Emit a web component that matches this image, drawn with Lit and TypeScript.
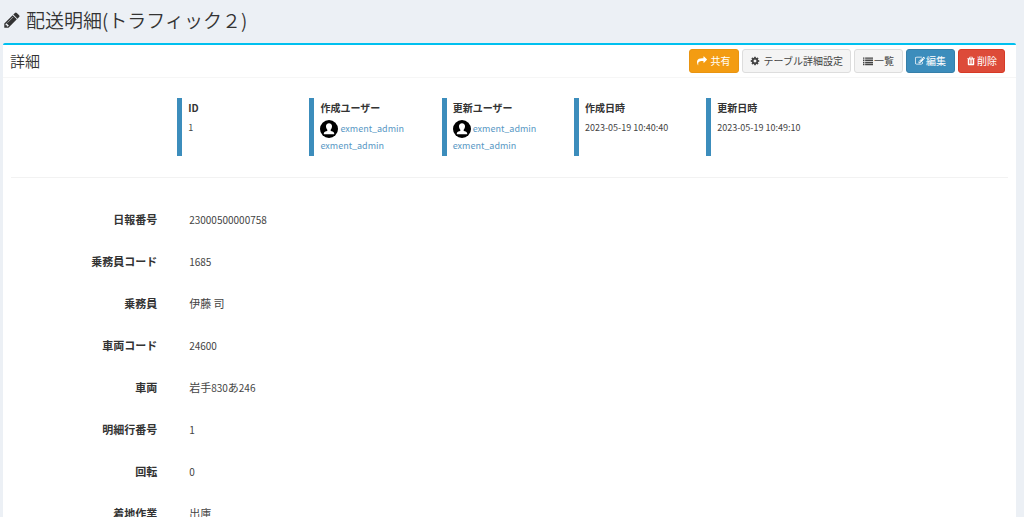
import { LitElement, html, css, svg } from "lit";
import { customElement, property } from "lit/decorators.js";

const ICONS: Record<string, string> = {
  pencil:
    "M491 1536l91-91-235-235-91 91v107h128v128h107zM1014 608q0-22-22-22-10 0-17 7l-542 542q-7 7-7 17 0 22 22 22 10 0 17-7l542-542q7-7 7-17zM960 416l416 416-832 832h-416v-416zM1643 512q0 53-37 90l-166 166-416-416 166-165q36-38 90-38 53 0 91 38l235 234q37 39 37 91z",
  share:
    "M1792 640q0 26-19 45l-512 512q-19 19-45 19t-45-19-19-45v-256h-224q-98 0-175.500 6t-154 21.500-133 42.500-105.500 69.500-80 101-48.500 138.500-17.500 181q0 55 5 123 0 6 2.500 23.500t2.500 26.500q0 15-8.500 25t-23.500 10q-16 0-28-17-7-9-13-22t-13.500-30-10.500-24q-127-285-127-451 0-199 53-333 162-403 875-403h224v-256q0-26 19-45t45-19 45 19l512 512q19 19 19 45z",
  cog: "M1152 896q0-106-75-181t-181-75-181 75-75 181 75 181 181 75 181-75 75-181zM1664 787v222q0 12-8 23t-20 13l-185 28q-19 54-39 91 35 50 107 138 10 12 10 25t-9 23q-27 37-99 108t-94 71q-12 0-26-9l-138-108q-44 23-91 38-16 136-29 186-7 28-36 28h-222q-14 0-24.500-8.500t-11.500-21.500l-28-184q-49-16-90-37l-141 107q-10 9-25 9-14 0-25-11-126-114-165-168-7-10-7-23 0-12 8-23 15-21 51-66.500t54-70.500q-27-50-41-99l-183-27q-13-2-21-12.500t-8-23.500v-222q0-12 8-23t19-13l186-28q14-46 39-92-40-57-107-138-10-12-10-24 0-10 9-23 26-36 98.500-107.500t94.500-71.500q13 0 26 10l138 107q44-23 91-38 16-136 29-186 7-28 36-28h222q14 0 24.500 8.500t11.500 21.500l28 184q49 16 90 37l142-107q9-9 24-9 13 0 25 10 129 119 165 170 7 8 7 22 0 12-8 23-15 21-51 66.500t-54 70.500q26 50 41 98l183 28q13 2 21 12.500t8 23.500z",
  list: "M0 256h256v256h-256zM384 256h1408v256h-1408zM0 640h256v256h-256zM384 640h1408v256h-1408zM0 1024h256v256h-256zM384 1024h1408v256h-1408zM0 1408h256v256h-256zM384 1408h1408v256h-1408z",
  edit: "M888 1184l116-116-152-152-116 116v56h96v96h56zM1328 464q-16-16-33 1l-350 350q-17 17-1 33t33-1l350-350q17-17 1-33zM1408 1058v190q0 119-84.500 203.500t-203.500 84.500h-832q-119 0-203.500-84.500t-84.500-203.500v-832q0-119 84.500-203.500t203.500-84.500h832q63 0 117 25 15 7 18 23 3 17-9 29l-49 49q-14 14-32 8-23-6-45-6h-832q-66 0-113 47t-47 113v832q0 66 47 113t113 47h832q66 0 113-47t47-113v-126q0-13 9-22l64-64q15-15 35-7t20 29zM1312 320l288 288-672 672h-288v-288zM1756 452l-92 92-288-288 92-92q28-28 68-28t68 28l152 152q28 28 28 68t-28 68z",
  trash:
    "M704 1376v-704q0-14-9-23t-23-9h-64q-14 0-23 9t-9 23v704q0 14 9 23t23 9h64q14 0 23-9t9-23zM960 1376v-704q0-14-9-23t-23-9h-64q-14 0-23 9t-9 23v704q0 14 9 23t23 9h64q14 0 23-9t9-23zM1216 1376v-704q0-14-9-23t-23-9h-64q-14 0-23 9t-9 23v704q0 14 9 23t23 9h64q14 0 23-9t9-23zM672 384h448l-48-117q-7-9-17-11h-317q-10 2-17 11zM1600 416v64q0 14-9 23t-23 9h-96v948q0 83-47 143.500t-113 60.500h-832q-66 0-113-58.500t-47-141.500v-952h-96q-14 0-23-9t-9-23v-64q0-14 9-23t23-9h309l70-167q15-37 54-63t79-26h320q40 0 79 26t54 63l70 167h309q14 0 23 9t9 23z",
};

@customElement("fa-icon")
export class FaIcon extends LitElement {
  @property() name = "";
  static styles = css`
    :host {
      display: inline-flex;
      flex: none;
    }
    .glyph {
      width: 100%;
      height: 100%;
      fill: currentColor;
    }
  `;
  render() {
    return html`<svg class="glyph" viewBox="0 0 1792 1792" aria-hidden="true">
      ${svg`<path d=${ICONS[this.name] ?? ""}></path>`}
    </svg>`;
  }
}

interface Meta {
  label: string;
  value: string;
  user?: boolean;
}

const META: Meta[] = [
  { label: "ID", value: "1" },
  { label: "作成ユーザー", value: "exment_admin", user: true },
  { label: "更新ユーザー", value: "exment_admin", user: true },
  { label: "作成日時", value: "2023-05-19 10:40:40" },
  { label: "更新日時", value: "2023-05-19 10:49:10" },
];

const FIELDS: [string, string][] = [
  ["日報番号", "23000500000758"],
  ["乗務員コード", "1685"],
  ["乗務員", "伊藤 司"],
  ["車両コード", "24600"],
  ["車両", "岩手830あ246"],
  ["明細行番号", "1"],
  ["回転", "0"],
  ["着地作業", "出庫"],
];

// Digits are set one size smaller than the kanji and kana around them.
const mixed = (text: string) =>
  text
    .split(/(\d+)/)
    .filter((part) => part !== "")
    .map((part) => (/^\d/.test(part) ? html`<span class="num">${part}</span>` : part));

@customElement("app-root")
export class AppRoot extends LitElement {
  static styles = css`
    :host {
      display: block;
      box-sizing: border-box;
      min-height: 100vh;
      padding: 0 8px 0 3px;
      background: #ecf0f5;
      color: #333;
      font-family: "Noto Sans CJK JP", "Noto Sans", sans-serif;
      font-size: 10px;
      line-height: 16px;
    }
    .title {
      display: flex;
      align-items: center;
      gap: 5px;
      margin: 0;
      padding: 6px 0 9px;
      font-size: 19px;
      line-height: 28px;
      font-weight: 350;
    }
    .title-icon {
      width: 18px;
      height: 18px;
    }
    .box {
      background: #fff;
      border-top: 2px solid #00c0ef;
      border-radius: 2px;
    }
    .head {
      display: flex;
      flex-wrap: wrap;
      align-items: center;
      justify-content: space-between;
      padding: 4px 11px 4px 7px;
      border-bottom: 1px solid #f6f6f6;
    }
    .subtitle {
      margin: 0;
      font-size: 15px;
      line-height: 24px;
      font-weight: 350;
    }
    .tools {
      display: flex;
      flex-wrap: wrap;
      gap: 3px;
    }
    .btn {
      display: inline-flex;
      align-items: center;
      gap: 1px;
      box-sizing: border-box;
      height: 24px;
      padding: 0 8px;
      border: 1px solid #ddd;
      border-radius: 3px;
      background: #f4f4f4;
      color: #444;
      font: inherit;
      text-decoration: none;
      cursor: pointer;
    }
    .btn-icon {
      width: 10px;
      height: 10px;
    }
    .spaced {
      gap: 4px;
      padding: 0 7px;
    }
    .warning {
      background: #f39c12;
      border-color: #e99411;
      color: #fff;
    }
    .primary {
      background: #3c8dbc;
      border-color: #367fa9;
      color: #fff;
    }
    .danger {
      padding: 0 7px;
      background: #dd4b39;
      border-color: #d73925;
      color: #fff;
    }
    .body {
      padding: 20px 8px;
    }
    .meta {
      display: grid;
      grid-template-columns: repeat(5, minmax(0, 1fr));
      margin: 0 17% 21px calc(100% / 6);
    }
    .meta-item {
      border-left: 5px solid #3c8dbc;
      min-height: 58px;
      padding-left: 6px;
      box-sizing: border-box;
    }
    .meta-label {
      font-weight: 700;
      padding-top: 2px;
    }
    .meta-value {
      margin: 4px 0 0;
      font-size: 9px;
      color: #444;
    }
    .user {
      margin: 4px 0 0;
      font-size: 9px;
    }
    .user-link {
      display: flex;
      align-items: center;
      gap: 2px;
      color: #5797c4;
      text-decoration: none;
    }
    .avatar {
      width: 18px;
      height: 18px;
      flex: none;
    }
    .rule {
      margin: 0;
      border: 0;
      border-top: 1px solid #f2f2f2;
    }
    .fields {
      margin: 0;
      padding-top: 20px;
    }
    .row {
      display: grid;
      grid-template-columns: minmax(0, 2fr) minmax(0, 10fr);
      align-items: center;
      min-height: 42px;
      font-size: 11px;
    }
    .row-label {
      padding-right: 20px;
      text-align: right;
      font-weight: 700;
    }
    .row-value {
      margin: 0;
      padding-left: 12px;
      color: #444;
    }
    .num {
      font-size: 10px;
    }
  `;

  private renderMeta(m: Meta) {
    return html`<div class="meta-item">
      <dt class="meta-label">${m.label}</dt>
      ${m.user
        ? html`<dd class="user">
            <a class="user-link" href="#user">
              <svg class="avatar" viewBox="0 0 18 18" aria-hidden="true">
                <circle cx="9" cy="9" r="9" fill="#000"></circle>
                <path
                  fill="#fff"
                  d="M9 3.200c-1.900 0-3 1.300-3 3.100 0 1.400.6 2.700 1.300 3.400v1.400c-1.600.3-3.500 1-3.500 2.400v.7h10.400v-.7c0-1.400-1.900-2.100-3.500-2.400V9.700c.7-.7 1.300-2 1.300-3.400 0-1.800-1.100-3.100-3-3.100z"
                ></path>
              </svg>
              ${m.value}
            </a>
            <a class="user-link" href="#user">${m.value}</a>
          </dd>`
        : html`<dd class="meta-value">${m.value}</dd>`}
    </div>`;
  }

  render() {
    return html`
      <h1 class="title">
        <fa-icon class="title-icon" name="pencil"></fa-icon>
        <span>配送明細(トラフィック２)</span>
      </h1>
      <main class="box">
        <header class="head">
          <h2 class="subtitle">詳細</h2>
          <div class="tools">
            <button class="btn spaced warning" type="button">
              <fa-icon class="btn-icon" name="share"></fa-icon>共有
            </button>
            <a class="btn spaced" href="#settings">
              <fa-icon class="btn-icon" name="cog"></fa-icon>テーブル詳細設定
            </a>
            <a class="btn" href="#list"><fa-icon class="btn-icon" name="list"></fa-icon>一覧</a>
            <a class="btn primary" href="#edit"><fa-icon class="btn-icon" name="edit"></fa-icon>編集</a>
            <button class="btn danger" type="button">
              <fa-icon class="btn-icon" name="trash"></fa-icon>削除
            </button>
          </div>
        </header>
        <div class="body">
          <dl class="meta">${META.map((m) => this.renderMeta(m))}</dl>
          <hr class="rule" />
          <dl class="fields">
            ${FIELDS.map(
              ([label, value]) => html`<div class="row">
                <dt class="row-label">${label}</dt>
                <dd class="row-value">${mixed(value)}</dd>
              </div>`
            )}
          </dl>
        </div>
      </main>
    `;
  }
}
